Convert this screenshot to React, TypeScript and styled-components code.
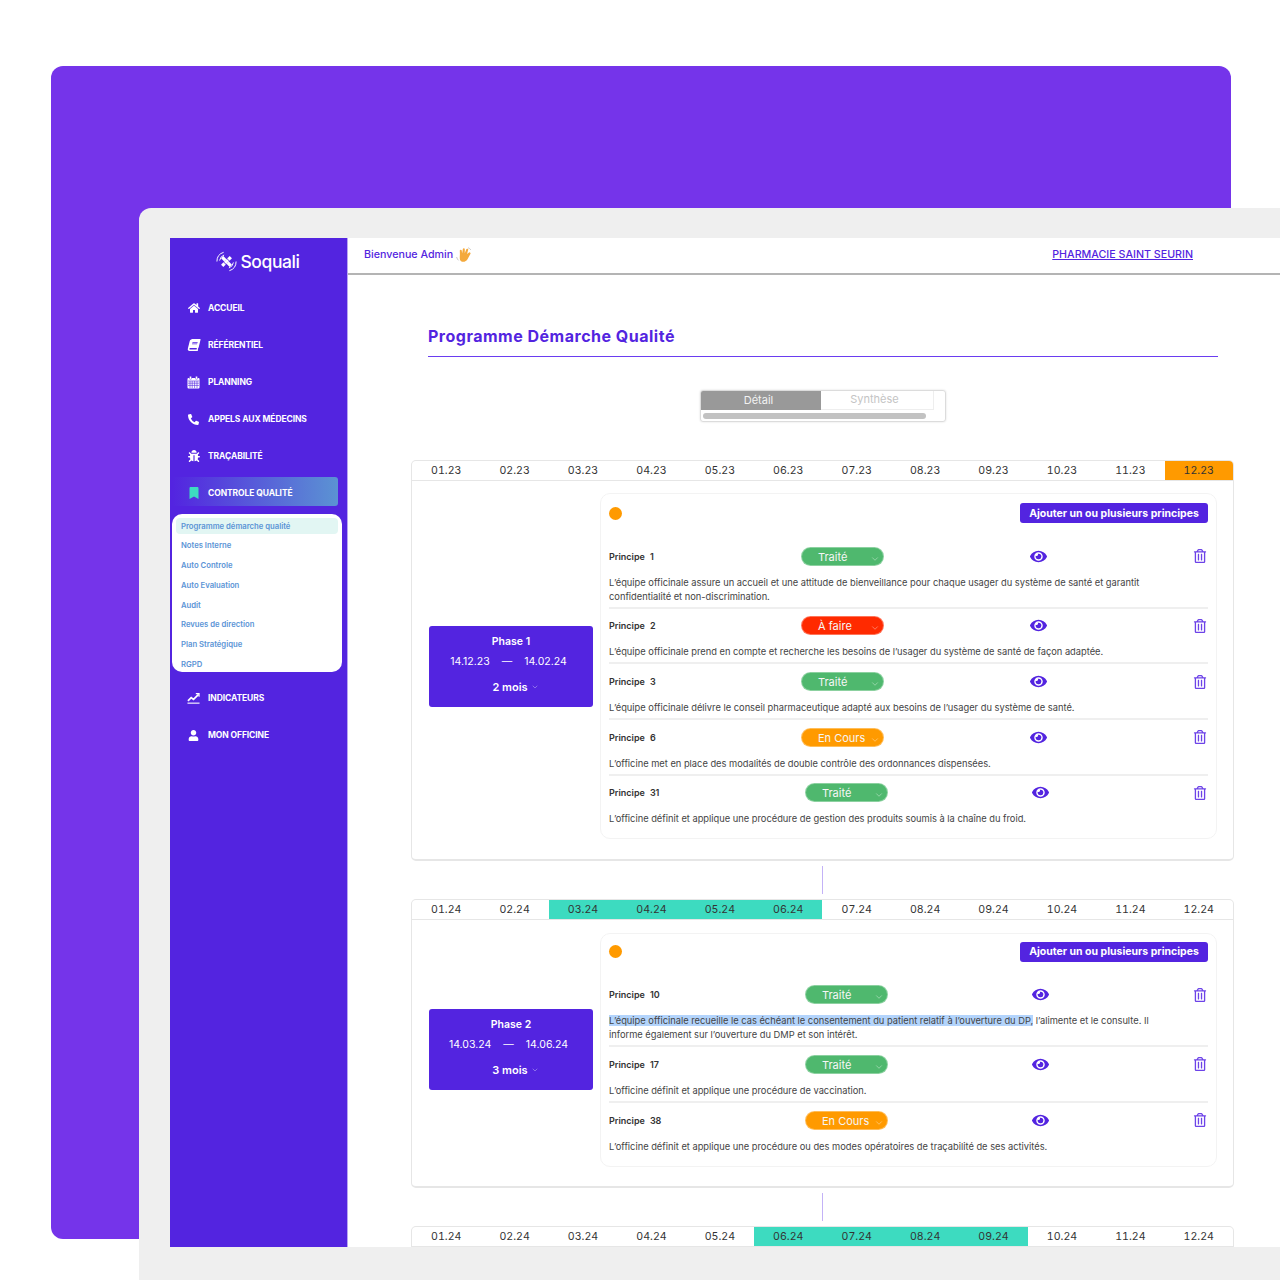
import React from "react";
import styled, { createGlobalStyle } from "styled-components";
import {
  FaBook,
  FaBookmark,
  FaBug,
  FaEye,
  FaHome,
  FaPhoneAlt,
  FaRegTrashAlt,
  FaUser,
} from "react-icons/fa";
import { FiChevronDown } from "react-icons/fi";

const INDIGO = "#5324e0";
const FONT = `Inter, "Liberation Sans", sans-serif`;

const GlobalStyle = createGlobalStyle`
  html, body {
    margin: 0;
    padding: 0;
    background: #fff;
  }
  body {
    font-family: ${FONT};
  }
  * {
    box-sizing: border-box;
  }
`;

const Page = styled.div`
  position: relative;
  width: 1280px;
  height: 1280px;
  padding: 66px 49px 41px 51px;
  overflow: hidden;
`;

const Backdrop = styled.div`
  height: 100%;
  background: #7534ea;
  border-radius: 12px;
`;

const Frame = styled.div`
  position: absolute;
  left: 139px;
  top: 208px;
  width: 1141px;
  height: 1072px;
  padding: 30px 0 33px 31px;
  background: #efefef;
  border-top-left-radius: 12px;
`;

const Screen = styled.div`
  display: flex;
  height: 100%;
  overflow: hidden;
  background: #fff;
`;

const Sidebar = styled.aside`
  flex: 0 0 178px;
  display: flex;
  flex-direction: column;
  background: ${INDIGO};
  border-right: 1px solid #b9a6f2;
  padding: 10px 0 0 2px;
`;

const Brand = styled.div`
  display: flex;
  align-items: center;
  justify-content: center;
  gap: 2px;
  height: 26px;
  margin: 0 0 18px 0;
  padding-right: 4px;
  color: #fff;
  font-size: 17.5px;
  font-weight: 500;
  letter-spacing: -0.4px;
`;

const NavItem = styled.div<{ $active?: boolean }>`
  display: flex;
  align-items: center;
  gap: 8px;
  width: 166px;
  height: 29px;
  margin-bottom: 8px;
  padding: 3px 0 0 15px;
  border-radius: 3px;
  color: #fff;
  font-size: 8.5px;
  font-weight: 700;
  letter-spacing: -0.1px;
  background: ${(p) =>
    p.$active ? `linear-gradient(90deg, ${INDIGO} 0%, #5b93d3 100%)` : "transparent"};
`;

const NavIcon = styled.span<{ $active?: boolean }>`
  flex: 0 0 13px;
  display: flex;
  align-items: center;
  justify-content: center;
  font-size: 12px;
  color: ${(p) => (p.$active ? "#3ddbc0" : "#fff")};
`;

const TiltedBook = styled(FaBook)`
  transform: skewX(-14deg);
`;

const SubMenu = styled.div`
  width: 170px;
  height: 158px;
  margin-bottom: 10px;
  padding: 4px 4px 0;
  background: #fff;
  border-radius: 10px;
  overflow: hidden;
`;

const SubItem = styled.div<{ $active?: boolean }>`
  display: flex;
  align-items: center;
  height: 16px;
  margin-bottom: 3.75px;
  padding-left: 5px;
  border-radius: 4px;
  color: #5b94d6;
  font-size: 7.7px;
  font-weight: 600;
  background: ${(p) => (p.$active ? "#e2f6f3" : "transparent")};
`;

const Main = styled.main`
  flex: 1;
  min-width: 0;
  display: flex;
  flex-direction: column;
`;

const TopBar = styled.header`
  flex: 0 0 37px;
  display: flex;
  align-items: center;
  justify-content: space-between;
  padding: 0 87px 2px 16px;
  border-bottom: 2px solid #b4b4b4;
  font-size: 10.7px;
  font-weight: 500;
  color: ${INDIGO};
`;

const Welcome = styled.div`
  display: flex;
  align-items: center;
  gap: 3px;
`;

const Pharmacy = styled.a`
  color: ${INDIGO};
  text-decoration: underline;
`;

const Content = styled.div`
  padding: 51px 46px 0 63px;
`;

const Title = styled.h1`
  margin: 0 16px 0 17px;
  height: 31px;
  border-bottom: 1px solid #6a3df0;
  color: ${INDIGO};
  font-size: 16px;
  line-height: 20px;
  font-weight: 700;
  letter-spacing: 0.5px;
`;

const ToggleWrap = styled.div`
  display: flex;
  justify-content: center;
  margin: 33px 0 38px;
`;

const Toggle = styled.div`
  width: 246px;
  height: 32px;
  border: 1px solid #dcdcdc;
  border-radius: 3px;
  box-shadow: 0 0 2px rgba(0, 0, 0, 0.15);
  overflow: hidden;
`;

const Tabs = styled.div`
  display: flex;
  height: 19px;
`;

const Tab = styled.div<{ $on?: boolean }>`
  display: flex;
  align-items: center;
  justify-content: center;
  width: ${(p) => (p.$on ? "120px" : "113px")};
  padding: 0 4px 2px 0;
  background: ${(p) => (p.$on ? "#999" : "#fff")};
  color: ${(p) => (p.$on ? "#f2f2f2" : "#c4c4c4")};
  border-right: ${(p) => (p.$on ? "none" : "1px solid #eee")};
  border-bottom: ${(p) => (p.$on ? "none" : "1px solid #eee")};
  font-size: 11px;
`;

const Scrollbar = styled.div`
  width: 223px;
  height: 6px;
  margin: 3px 0 0 2px;
  border-radius: 3px;
  background: #c2c2c2;
`;

const Panel = styled.section<{ $height: number }>`
  height: ${(p) => p.$height}px;
  border: 1px solid #e6e6e6;
  border-bottom-width: 2px;
  border-radius: 5px;
  overflow: hidden;
`;

const Months = styled.div`
  display: grid;
  grid-template-columns: repeat(12, 1fr);
  height: 20px;
  border-bottom: 1px solid #e6e6e6;
`;

const Month = styled.div<{ $bg?: string }>`
  display: flex;
  align-items: center;
  justify-content: center;
  padding-bottom: 1px;
  background: ${(p) => p.$bg ?? "transparent"};
  color: #333;
  font-size: 10.6px;
  font-variant-numeric: tabular-nums;
`;

const PanelBody = styled.div<{ $top: number }>`
  display: flex;
  align-items: center;
  gap: 7px;
  padding: ${(p) => p.$top}px 16px 22px 17px;
`;

const PhaseBox = styled.div`
  flex: 0 0 164px;
  height: 81px;
  display: flex;
  flex-direction: column;
  align-items: center;
  padding-top: 9px;
  background: ${INDIGO};
  border-radius: 3px;
  color: #fff;
  font-size: 10.5px;
`;

const PhaseName = styled.div`
  height: 14px;
  line-height: 14px;
  font-weight: 600;
`;

const PhaseDates = styled.div`
  display: flex;
  gap: 12px;
  height: 14px;
  margin-top: 6px;
  padding-right: 5px;
  line-height: 14px;
`;

const PhaseLength = styled.div`
  display: flex;
  align-items: center;
  gap: 3px;
  height: 14px;
  margin: 11px 0 0 9px;
  font-size: 11px;
  font-weight: 600;
`;

const Card = styled.div<{ $top: number }>`
  flex: 1;
  min-width: 0;
  padding: ${(p) => p.$top}px 8px 12px;
  border: 1px solid #f3f3f3;
  border-radius: 10px;
`;

const CardHead = styled.div`
  display: flex;
  align-items: center;
  justify-content: space-between;
  margin-bottom: 16px;
`;

const Dot = styled.span`
  width: 13px;
  height: 13px;
  border-radius: 50%;
  background: #ff9a00;
`;

const AddButton = styled.button`
  width: 188px;
  height: 20px;
  padding: 0;
  border: none;
  border-radius: 3px;
  background: ${INDIGO};
  color: #fff;
  font-family: inherit;
  font-size: 10.5px;
  font-weight: 700;
`;

const Row = styled.div`
  padding: 7.7px 0 3px;
  border-bottom: 2px solid #efefef;

  &:last-child {
    border-bottom: none;
    padding-bottom: 0;
  }
`;

const RowHead = styled.div<{ $labelWidth: number }>`
  display: grid;
  grid-template-columns: ${(p) => p.$labelWidth}px 83px 1fr 16px;
  align-items: center;
  height: 19px;
  margin-bottom: 10px;
`;

const Label = styled.div`
  display: flex;
  gap: 5px;
  color: #333;
  font-size: 9px;
  font-weight: 600;
`;

const Pill = styled.div<{ $bg: string }>`
  position: relative;
  height: 19px;
  padding-left: 16px;
  border-radius: 10px;
  border: 1px solid rgba(255, 255, 255, 0.35);
  background: ${(p) => p.$bg};
  color: #f6f6f6;
  font-size: 11px;
  line-height: 18px;
`;

const PillChevron = styled.span`
  position: absolute;
  right: 3px;
  top: 3px;
  font-size: 10px;
  color: rgba(255, 255, 255, 0.45);
`;

const EyeCell = styled.div`
  display: flex;
  justify-content: center;
  font-size: 17px;
  color: ${INDIGO};
`;

const TrashCell = styled.div`
  display: flex;
  justify-content: center;
  font-size: 14px;
  color: #6d43e8;
`;

const Description = styled.p`
  max-width: 545px;
  margin: 0;
  color: #444;
  font-size: 9.3px;
  line-height: 14px;
`;

const Selected = styled.span`
  background: #b3d4fc;
`;

const Connector = styled.div`
  width: 1px;
  height: 28px;
  margin: 5px auto;
  background: #c3b2f7;
`;

const LogoMark = () => (
  <svg width="23" height="23" viewBox="0 0 24 24" fill="none" stroke="#fff" strokeLinecap="butt">
    <path d="M2 12 A10 10 0 0 1 9 2.4" strokeWidth="1" />
    <path d="M4.8 11 A7.5 7.5 0 0 1 9.5 5.2" strokeWidth="1" />
    <path d="M22 12 A10 10 0 0 1 15 21.6" strokeWidth="1" />
    <path d="M19.2 13 A7.5 7.5 0 0 1 14.5 18.8" strokeWidth="1" />
    <path d="M7.5 7.5 L10.8 10.8 M13.2 13.2 L16.5 16.5" strokeWidth="3.4" />
    <path d="M16.5 7.5 L7.5 16.5" strokeWidth="3.4" />
    <path d="M12 8.5 L15.5 12 M8.5 12 L12 15.5" strokeWidth="1" stroke={INDIGO} />
  </svg>
);

const WaveHand = () => (
  <svg width="16" height="16" viewBox="0 0 16 16">
    <g transform="rotate(22 8 8)">
      <path
        d="M4 9 L2.4 5.4 a1 1 0 0 1 1.8-.8 L5.6 7 L4.7 2.9 a1 1 0 0 1 1.9-.5 L8 6 L8 1.9 a1 1 0 0 1 2 0 L10.5 6 L11.7 3.8 a1 1 0 0 1 1.8.8 L12.9 10 C12.6 13.5 9.8 15.2 7.6 14.8 C5.6 14.4 4.8 11.4 4 9 Z"
        fill="#f4a93c"
      />
    </g>
    <path d="M0.6 10 C1 11.6 1.6 12.6 2.6 13.4" stroke="#c9c9c9" strokeWidth="1" fill="none" />
    <path d="M12 0.8 C13 1 14.2 1.8 14.8 3" stroke="#c9c9c9" strokeWidth="1" fill="none" />
  </svg>
);

const CalendarIcon = () => (
  <svg width="13" height="13" viewBox="0 0 13 13" fill="none">
    <rect x="0.5" y="2" width="12" height="10.5" rx="1" fill="#fff" />
    <rect x="2.5" y="0.3" width="2" height="3" rx="0.6" fill="#fff" stroke={INDIGO} strokeWidth="0.4" />
    <rect x="8.5" y="0.3" width="2" height="3" rx="0.6" fill="#fff" stroke={INDIGO} strokeWidth="0.4" />
    <path
      d="M1 5 H12 M1 7.2 H12 M1 9.4 H12 M3 5 V12 M5.2 5 V12 M7.6 5 V12 M10 5 V12"
      stroke={INDIGO}
      strokeWidth="0.6"
    />
  </svg>
);

const ChartIcon = () => (
  <svg width="13" height="13" viewBox="0 0 14 13" fill="none" stroke="#fff">
    <path d="M1 9 L4.5 5.5 L7 7.5 L12.5 2" strokeWidth="1.8" />
    <path d="M9.5 1.2 H13 V4.7" strokeWidth="1.2" />
    <path d="M0.5 11.5 H13.5" strokeWidth="1.2" />
  </svg>
);

const navTop = [
  { label: "ACCUEIL", icon: <FaHome /> },
  { label: "RÉFÉRENTIEL", icon: <TiltedBook /> },
  { label: "PLANNING", icon: <CalendarIcon /> },
  { label: "APPELS AUX MÉDECINS", icon: <FaPhoneAlt size={11} /> },
  { label: "TRAÇABILITÉ", icon: <FaBug /> },
];

const navBottom = [
  { label: "INDICATEURS", icon: <ChartIcon /> },
  { label: "MON OFFICINE", icon: <FaUser size={11} /> },
];

const subItems = [
  "Programme démarche qualité",
  "Notes Interne",
  "Auto Controle",
  "Auto Evaluation",
  "Audit",
  "Revues de direction",
  "Plan Stratégique",
  "RGPD",
];

const STATUS_COLORS: Record<string, string> = {
  "Traité": "#4fb86e",
  "À faire": "#ff2a00",
  "En Cours": "#ff9a00",
};

type Principle = { num: number; status: string; text: React.ReactNode };

const phaseOne: Principle[] = [
  {
    num: 1,
    status: "Traité",
    text: "L’équipe officinale assure un accueil et une attitude de bienveillance pour chaque usager du système de santé et garantit confidentialité et non-discrimination.",
  },
  {
    num: 2,
    status: "À faire",
    text: "L’équipe officinale prend en compte et recherche les besoins de l’usager du système de santé de façon adaptée.",
  },
  {
    num: 3,
    status: "Traité",
    text: "L’équipe officinale délivre le conseil pharmaceutique adapté aux besoins de l’usager du système de santé.",
  },
  {
    num: 6,
    status: "En Cours",
    text: "L’officine met en place des modalités de double contrôle des ordonnances dispensées.",
  },
];

const phaseOneLast: Principle = {
  num: 31,
  status: "Traité",
  text: "L’officine définit et applique une procédure de gestion des produits soumis à la chaîne du froid.",
};

const phaseTwo: Principle[] = [
  {
    num: 10,
    status: "Traité",
    text: (
      <>
        <Selected>
          L’équipe officinale recueille le cas échéant le consentement du patient relatif à
          l’ouverture du DP,
        </Selected>{" "}
        <span>l’alimente et le consulte. Il</span>
        <br />
        <span>informe également sur l’ouverture du DMP et son intérêt.</span>
      </>
    ),
  },
  {
    num: 17,
    status: "Traité",
    text: "L’officine définit et applique une procédure de vaccination.",
  },
  {
    num: 38,
    status: "En Cours",
    text: "L’officine définit et applique une procédure ou des modes opératoires de traçabilité de ses activités.",
  },
];

const PrincipleRow = ({ item, labelWidth }: { item: Principle; labelWidth: number }) => (
  <Row>
    <RowHead $labelWidth={labelWidth}>
      <Label>
        <span>Principe</span>
        <span>{item.num}</span>
      </Label>
      <Pill $bg={STATUS_COLORS[item.status]}>
        {item.status}
        <PillChevron>
          <FiChevronDown />
        </PillChevron>
      </Pill>
      <EyeCell>
        <FaEye />
      </EyeCell>
      <TrashCell>
        <FaRegTrashAlt />
      </TrashCell>
    </RowHead>
    <Description>{item.text}</Description>
  </Row>
);

const MonthStrip = ({ year, from, to, color }: { year: string; from: number; to: number; color: string }) => (
  <Months>
    {Array.from({ length: 12 }, (_, i) => {
      const m = i + 1;
      return (
        <Month key={m} $bg={m >= from && m <= to ? color : undefined}>
          {String(m).padStart(2, "0")}.{year}
        </Month>
      );
    })}
  </Months>
);

const Phase = ({ name, start, end, length }: { name: string; start: string; end: string; length: string }) => (
  <PhaseBox>
    <PhaseName>{name}</PhaseName>
    <PhaseDates>
      <span>{start}</span>
      <span>—</span>
      <span>{end}</span>
    </PhaseDates>
    <PhaseLength>
      {length}
      <FiChevronDown size={8} color="#a994f0" />
    </PhaseLength>
  </PhaseBox>
);

export default function App(): React.JSX.Element {
  return (
    <>
      <GlobalStyle />
      <Page>
        <Backdrop />
        <Frame>
          <Screen>
            <Sidebar>
              <Brand>
                <LogoMark />
                Soquali
              </Brand>
              {navTop.map((n) => (
                <NavItem key={n.label}>
                  <NavIcon>{n.icon}</NavIcon>
                  {n.label}
                </NavItem>
              ))}
              <NavItem $active>
                <NavIcon $active>
                  <FaBookmark />
                </NavIcon>
                CONTROLE QUALITÉ
              </NavItem>
              <SubMenu>
                {subItems.map((s, i) => (
                  <SubItem key={s} $active={i === 0}>
                    {s}
                  </SubItem>
                ))}
              </SubMenu>
              {navBottom.map((n) => (
                <NavItem key={n.label}>
                  <NavIcon>{n.icon}</NavIcon>
                  {n.label}
                </NavItem>
              ))}
            </Sidebar>
            <Main>
              <TopBar>
                <Welcome>
                  Bienvenue Admin
                  <WaveHand />
                </Welcome>
                <Pharmacy href="#">PHARMACIE SAINT SEURIN</Pharmacy>
              </TopBar>
              <Content>
                <Title>Programme Démarche Qualité</Title>
                <ToggleWrap>
                  <Toggle>
                    <Tabs>
                      <Tab $on>Détail</Tab>
                      <Tab>Synthèse</Tab>
                    </Tabs>
                    <Scrollbar />
                  </Toggle>
                </ToggleWrap>

                <Panel $height={401}>
                  <MonthStrip year="23" from={12} to={12} color="#ff9a00" />
                  <PanelBody $top={12}>
                    <Phase name="Phase 1" start="14.12.23" end="14.02.24" length="2 mois" />
                    <Card $top={9}>
                      <CardHead>
                        <Dot />
                        <AddButton>Ajouter un ou plusieurs principes</AddButton>
                      </CardHead>
                      {phaseOne.map((p) => (
                        <PrincipleRow key={p.num} item={p} labelWidth={192} />
                      ))}
                      <PrincipleRow item={phaseOneLast} labelWidth={196} />
                    </Card>
                  </PanelBody>
                </Panel>
                <Connector />
                <Panel $height={289}>
                  <MonthStrip year="24" from={3} to={6} color="#3ddbc0" />
                  <PanelBody $top={13}>
                    <Phase name="Phase 2" start="14.03.24" end="14.06.24" length="3 mois" />
                    <Card $top={7.5}>
                      <CardHead>
                        <Dot />
                        <AddButton>Ajouter un ou plusieurs principes</AddButton>
                      </CardHead>
                      {phaseTwo.map((p) => (
                        <PrincipleRow key={p.num} item={p} labelWidth={196} />
                      ))}
                    </Card>
                  </PanelBody>
                </Panel>
                <Connector />
                <Panel $height={200}>
                  <MonthStrip year="24" from={6} to={9} color="#3ddbc0" />
                </Panel>
              </Content>
            </Main>
          </Screen>
        </Frame>
      </Page>
    </>
  );
}
